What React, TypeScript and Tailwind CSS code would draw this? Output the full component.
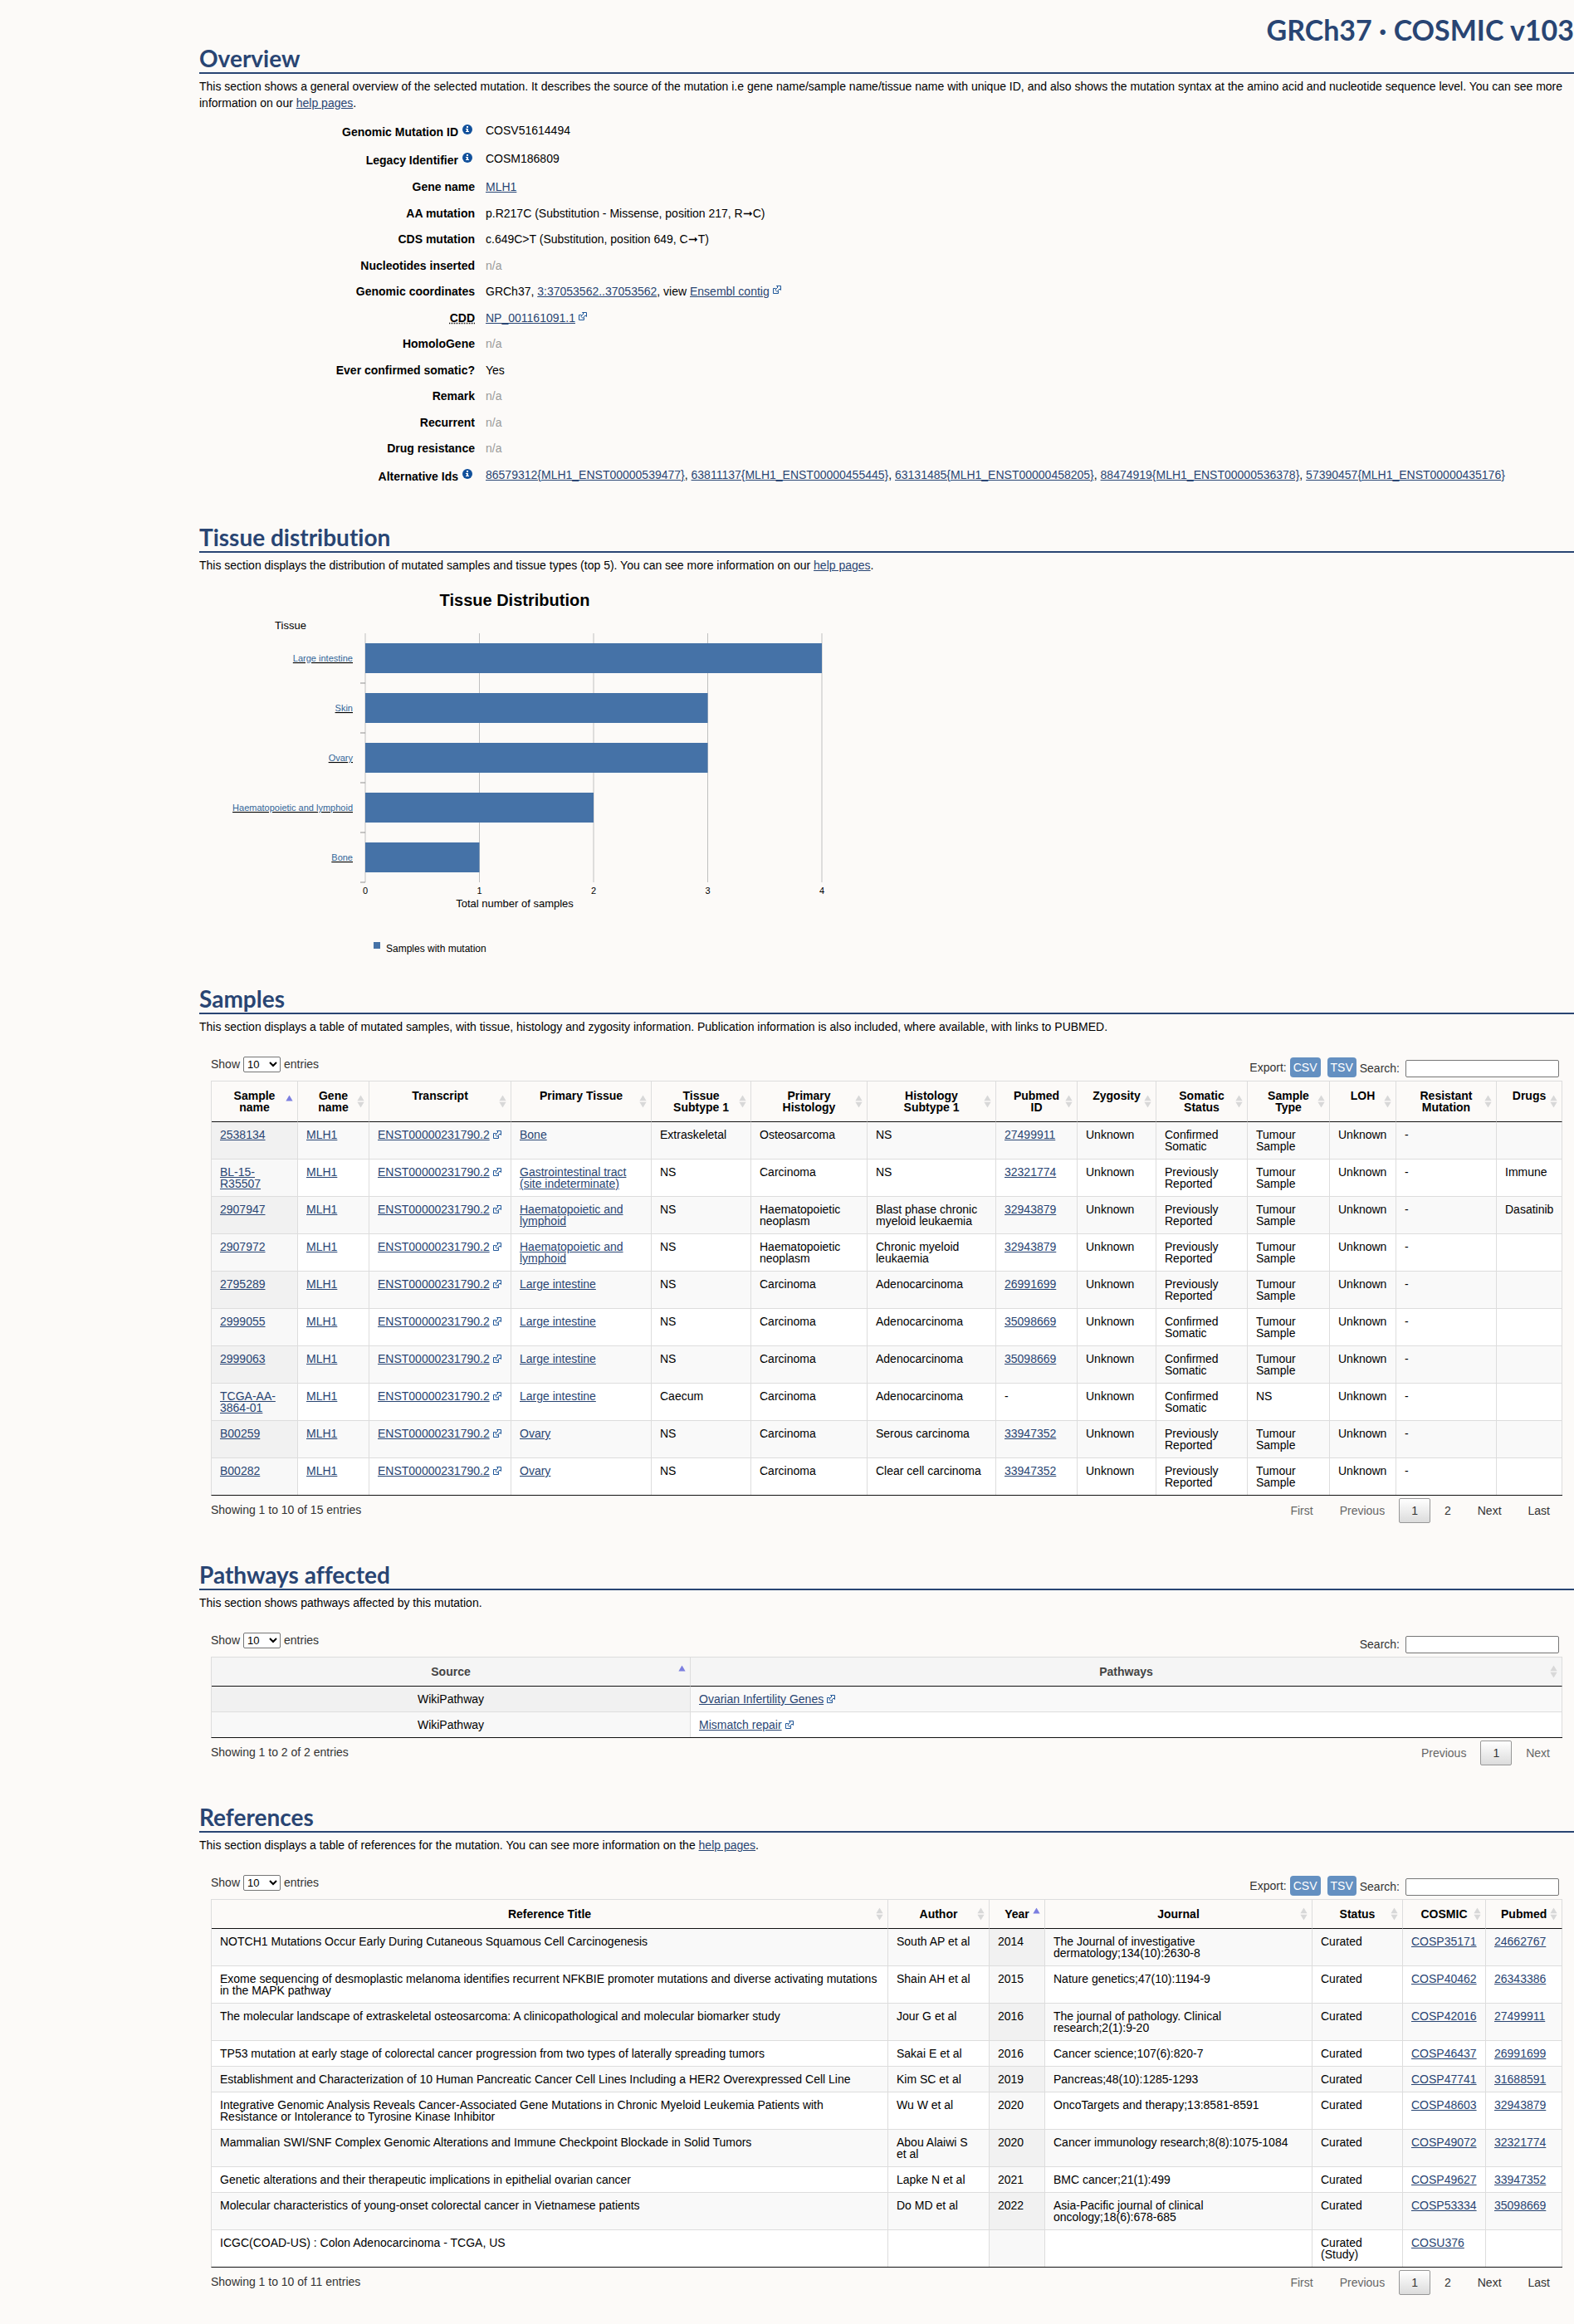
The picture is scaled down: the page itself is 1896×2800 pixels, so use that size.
import type { ReactNode } from 'react';

const na = <span className="text-[#999]">n/a</span>;

function A({ children }: { children: ReactNode }) {
  return (
    <a href="#" className="text-[#294573] underline">
      {children}
    </a>
  );
}

function ExternalIcon() {
  return (
    <svg viewBox="0 0 10 10" className="ml-1 inline-block size-[10px] align-baseline" fill="none" stroke="#1f5799" aria-hidden="true">
      <path d="M3.500 3.500H.5v6h6v-3" />
      <path d="M4.500 .5h5v5L8 4 5 7.500 2.800 5.200 6 2z" fill="#fcfaf8" />
    </svg>
  );
}

function InfoIcon() {
  return (
    <svg viewBox="0 0 12 12" className="mt-[3px] mr-[3px] ml-[5px] size-3" aria-hidden="true">
      <circle cx="6" cy="6" r="6" fill="#11509b" />
      <path d="M5 2h2v2H5zM4 5h3v3h1v1H4V8h1V6H4z" fill="#fff" />
    </svg>
  );
}

function Ext({ children }: { children: ReactNode }) {
  return (
    <span className="whitespace-nowrap">
      <A>{children}</A>
      <ExternalIcon />
    </span>
  );
}

function Section({ title, intro, children }: { title: string; intro: ReactNode; children: ReactNode }) {
  return (
    <section>
      <h2 className="border-b-2 border-[#294573] pb-[3px] font-[Lato,sans-serif] text-[28px] leading-7 font-bold text-[#294573] [font-variant-ligatures:none]">
        {title}
      </h2>
      <p className="pt-[5px] leading-5">{intro}</p>
      {children}
    </section>
  );
}

const overview: { label: ReactNode; info?: boolean; value: ReactNode }[] = [
  { label: 'Genomic Mutation ID', info: true, value: 'COSV51614494' },
  { label: 'Legacy Identifier', info: true, value: 'COSM186809' },
  { label: 'Gene name', value: <A>MLH1</A> },
  { label: 'AA mutation', value: 'p.R217C (Substitution - Missense, position 217, R➞C)' },
  { label: 'CDS mutation', value: 'c.649C>T (Substitution, position 649, C➞T)' },
  { label: 'Nucleotides inserted', value: na },
  {
    label: 'Genomic coordinates',
    value: (
      <>
        GRCh37, <A>3:37053562..37053562</A>, view <Ext>Ensembl contig</Ext>
      </>
    ),
  },
  { label: <abbr className="underline decoration-dotted">CDD</abbr>, value: <Ext>NP_001161091.1</Ext> },
  { label: 'HomoloGene', value: na },
  { label: 'Ever confirmed somatic?', value: 'Yes' },
  { label: 'Remark', value: na },
  { label: 'Recurrent', value: na },
  { label: 'Drug resistance', value: na },
  {
    label: 'Alternative Ids',
    info: true,
    value: (
      <>
        <A>{'86579312{MLH1_ENST00000539477}'}</A>, <A>{'63811137{MLH1_ENST00000455445}'}</A>,{' '}
        <A>{'63131485{MLH1_ENST00000458205}'}</A>, <A>{'88474919{MLH1_ENST00000536378}'}</A>,{' '}
        <A>{'57390457{MLH1_ENST00000435176}'}</A>
      </>
    ),
  },
];

const tissues = [
  { name: 'Large intestine', count: 4 },
  { name: 'Skin', count: 3 },
  { name: 'Ovary', count: 3 },
  { name: 'Haematopoietic and lymphoid', count: 2 },
  { name: 'Bone', count: 1 },
];

function TissueChart() {
  return (
    <svg
      width="760"
      height="460"
      className="mt-[2px] block"
      fontFamily="Liberation Sans, Arial, sans-serif"
      role="img"
      aria-label="Tissue Distribution"
    >
      <text x="380" y="37" textAnchor="middle" fontSize="20" fontWeight="bold">Tissue Distribution</text>
      <text x="110" y="65" textAnchor="middle" fontSize="13">Tissue</text>
      {[0, 1, 2, 3, 4].map((n) => (
        <g key={n}>
          <line x1={200 + n * 137.5} x2={200 + n * 137.5} y1="70" y2="370" stroke="#c0c0c0" />
          <text x={200 + n * 137.5} y="384" textAnchor="middle" fontSize="11">{n}</text>
        </g>
      ))}
      {tissues.map((t, i) => (
        <g key={t.name}>
          <rect x="200" y={82 + i * 60} width={t.count * 137.5} height="36" fill="#4572a7" />
          <line x1="194" x2="200" y1={130 + i * 60} y2={130 + i * 60} stroke="#909090" />
          <a href="#">
            <text x="185" y={104 + i * 60} textAnchor="end" fontSize="11" fill="#000" className="underline">
              <tspan fill="#336699">{t.name}</tspan>
            </text>
          </a>
        </g>
      ))}
      <text x="380" y="400" textAnchor="middle" fontSize="13">Total number of samples</text>
      <rect x="210" y="442" width="8" height="8" fill="#4572a7" />
      <text x="225" y="454" fontSize="12">Samples with mutation</text>
    </svg>
  );
}

function SortIcon({ sorted }: { sorted?: boolean }) {
  return (
    <svg viewBox="0 0 9 15" className="absolute top-1/2 right-[5px] h-[15px] w-[9px] -translate-y-1/2" aria-hidden="true">
      {sorted ? (
        <path d="M4.500 0L8.600 7H.4z" fill="#7c7fe0" />
      ) : (
        <path d="M4.500 0L8.600 6.700H.4zM4.500 15L.4 8.300h8.200z" fill="#d8d8d8" />
      )}
    </svg>
  );
}

type Column = { title: string; width: string };

type GridProps = {
  id: string;
  columns: Column[];
  rows: ReactNode[][];
  sorted: number;
  exportable?: boolean;
  muted?: boolean;
  total: string;
  pages: string[];
};

function DataGrid({ id, columns, rows, sorted, exportable, muted, total, pages }: GridProps) {
  return (
    <div className="mx-[14px] mt-[25px] pb-3 text-[#333]">
      <div className="flex h-[30px] items-start justify-between">
        <label className="flex h-5 items-center gap-1">
          Show
          <select className="h-[19px] w-[45px] rounded-xs border border-[#767676] bg-white text-[13px] text-black" defaultValue="10">
            <option>10</option>
            <option>25</option>
          </select>
          entries
        </label>
        <div className="flex h-[26px] items-end">
          {exportable && (
            <>
              <span className="mr-1 leading-6">Export:</span>
              <button className="mr-2 h-6 rounded-sm bg-[#6490c1] px-1 leading-6 text-white">CSV</button>
              <button className="mr-1 h-6 rounded-sm bg-[#6490c1] px-1 leading-6 text-white">TSV</button>
            </>
          )}
          <label htmlFor={id} className="mr-[7px] leading-[21px]">
            Search:
          </label>
          <input id={id} type="search" className="mr-1 h-[21px] w-[185px] rounded-xs border border-[#767676] bg-white px-1 text-black" />
        </div>
      </div>
      <table className="w-full table-fixed border-separate border-spacing-0 border-b border-l border-b-[#111] border-l-[#ddd] text-black">
        <colgroup>
          {columns.map((c) => (
            <col key={c.title} className={c.width} />
          ))}
        </colgroup>
        <thead>
          <tr className={muted ? 'bg-[#f5f5f5] text-[#444]' : ''}>
            {columns.map((c, i) => (
              <th
                key={c.title}
                className="relative border-t border-r border-b border-t-[#ddd] border-r-[#ddd] border-b-[#111] px-[18px] py-[10px] align-top leading-[14px] font-bold"
              >
                {c.title}
                <SortIcon sorted={i === sorted} />
              </th>
            ))}
          </tr>
        </thead>
        <tbody>
          {rows.map((row, r) => (
            <tr key={r} className="group odd:bg-[#f9f9f9] even:bg-white">
              {row.map((cell, i) => (
                <td
                  key={i}
                  className={`border-r border-b border-[#ddd] px-[10px] py-2 align-top leading-[14px] group-last:border-b-0 ${
                    i === sorted ? 'group-odd:bg-[#f1f1f1] group-even:bg-[#f8f8f8]' : ''
                  } ${muted && i === 0 ? 'text-center' : ''}`}
                >
                  {cell}
                </td>
              ))}
            </tr>
          ))}
        </tbody>
      </table>
      <div className="flex justify-between">
        <p className="pt-[7px] leading-5">{total}</p>
        <nav className="flex pt-[3px]">
          {pages.map((p) => (
            <button
              key={p}
              className={`ml-[2px] h-[30px] rounded-xs border px-[14px] ${
                p === '1'
                  ? 'border-[#979797] bg-linear-to-b from-white to-[#dcdcdc]'
                  : p === 'First' || p === 'Previous' || (p === 'Next' && muted)
                    ? 'border-transparent text-[#666]'
                    : 'border-transparent'
              }`}
            >
              {p}
            </button>
          ))}
        </nav>
      </div>
    </div>
  );
}

const sampleColumns: Column[] = [
  { title: 'Sample name', width: 'w-[104px]' },
  { title: 'Gene name', width: 'w-[86px]' },
  { title: 'Transcript', width: 'w-[171px]' },
  { title: 'Primary Tissue', width: 'w-[169px]' },
  { title: 'Tissue Subtype 1', width: 'w-[120px]' },
  { title: 'Primary Histology', width: 'w-[140px]' },
  { title: 'Histology Subtype 1', width: 'w-[155px]' },
  { title: 'Pubmed ID', width: 'w-[98px]' },
  { title: 'Zygosity', width: 'w-[95px]' },
  { title: 'Somatic Status', width: 'w-[110px]' },
  { title: 'Sample Type', width: 'w-[99px]' },
  { title: 'LOH', width: 'w-[80px]' },
  { title: 'Resistant Mutation', width: 'w-[121px]' },
  { title: 'Drugs', width: 'w-[79px]' },
];

const samples = [
  ['2538134', 'Bone', 'Extraskeletal', 'Osteosarcoma', 'NS', '27499911', 'Confirmed Somatic', 'Tumour Sample', ''],
  ['BL-15-R35507', 'Gastrointestinal tract (site indeterminate)', 'NS', 'Carcinoma', 'NS', '32321774', 'Previously Reported', 'Tumour Sample', 'Immune'],
  ['2907947', 'Haematopoietic and lymphoid', 'NS', 'Haematopoietic neoplasm', 'Blast phase chronic myeloid leukaemia', '32943879', 'Previously Reported', 'Tumour Sample', 'Dasatinib'],
  ['2907972', 'Haematopoietic and lymphoid', 'NS', 'Haematopoietic neoplasm', 'Chronic myeloid leukaemia', '32943879', 'Previously Reported', 'Tumour Sample', ''],
  ['2795289', 'Large intestine', 'NS', 'Carcinoma', 'Adenocarcinoma', '26991699', 'Previously Reported', 'Tumour Sample', ''],
  ['2999055', 'Large intestine', 'NS', 'Carcinoma', 'Adenocarcinoma', '35098669', 'Confirmed Somatic', 'Tumour Sample', ''],
  ['2999063', 'Large intestine', 'NS', 'Carcinoma', 'Adenocarcinoma', '35098669', 'Confirmed Somatic', 'Tumour Sample', ''],
  ['TCGA-AA-3864-01', 'Large intestine', 'Caecum', 'Carcinoma', 'Adenocarcinoma', '-', 'Confirmed Somatic', 'NS', ''],
  ['B00259', 'Ovary', 'NS', 'Carcinoma', 'Serous carcinoma', '33947352', 'Previously Reported', 'Tumour Sample', ''],
  ['B00282', 'Ovary', 'NS', 'Carcinoma', 'Clear cell carcinoma', '33947352', 'Previously Reported', 'Tumour Sample', ''],
];

const sampleRows = samples.map(([name, tissue, subtype, histology, histSub, pubmed, status, type, drugs]) => [
  <A>{name}</A>,
  <A>MLH1</A>,
  <Ext>ENST00000231790.2</Ext>,
  <A>{tissue}</A>,
  subtype,
  histology,
  histSub,
  pubmed === '-' ? '-' : <A>{pubmed}</A>,
  'Unknown',
  status,
  type,
  'Unknown',
  '-',
  drugs,
]);

const pathwayColumns: Column[] = [
  { title: 'Source', width: 'w-[577px]' },
  { title: 'Pathways', width: 'w-auto' },
];

const pathwayRows = [
  ['WikiPathway', <Ext>Ovarian Infertility Genes</Ext>],
  ['WikiPathway', <Ext>Mismatch repair</Ext>],
];

const referenceColumns: Column[] = [
  { title: 'Reference Title', width: 'w-auto' },
  { title: 'Author', width: 'w-[122px]' },
  { title: 'Year', width: 'w-[67px]' },
  { title: 'Journal', width: 'w-[322px]' },
  { title: 'Status', width: 'w-[109px]' },
  { title: 'COSMIC', width: 'w-[100px]' },
  { title: 'Pubmed', width: 'w-[92px]' },
];

const references = [
  ['NOTCH1 Mutations Occur Early During Cutaneous Squamous Cell Carcinogenesis', 'South AP et al', '2014', 'The Journal of investigative dermatology;134(10):2630-8', 'Curated', 'COSP35171', '24662767'],
  ['Exome sequencing of desmoplastic melanoma identifies recurrent NFKBIE promoter mutations and diverse activating mutations in the MAPK pathway', 'Shain AH et al', '2015', 'Nature genetics;47(10):1194-9', 'Curated', 'COSP40462', '26343386'],
  ['The molecular landscape of extraskeletal osteosarcoma: A clinicopathological and molecular biomarker study', 'Jour G et al', '2016', 'The journal of pathology. Clinical research;2(1):9-20', 'Curated', 'COSP42016', '27499911'],
  ['TP53 mutation at early stage of colorectal cancer progression from two types of laterally spreading tumors', 'Sakai E et al', '2016', 'Cancer science;107(6):820-7', 'Curated', 'COSP46437', '26991699'],
  ['Establishment and Characterization of 10 Human Pancreatic Cancer Cell Lines Including a HER2 Overexpressed Cell Line', 'Kim SC et al', '2019', 'Pancreas;48(10):1285-1293', 'Curated', 'COSP47741', '31688591'],
  ['Integrative Genomic Analysis Reveals Cancer-Associated Gene Mutations in Chronic Myeloid Leukemia Patients with Resistance or Intolerance to Tyrosine Kinase Inhibitor', 'Wu W et al', '2020', 'OncoTargets and therapy;13:8581-8591', 'Curated', 'COSP48603', '32943879'],
  ['Mammalian SWI/SNF Complex Genomic Alterations and Immune Checkpoint Blockade in Solid Tumors', 'Abou Alaiwi S et al', '2020', 'Cancer immunology research;8(8):1075-1084', 'Curated', 'COSP49072', '32321774'],
  ['Genetic alterations and their therapeutic implications in epithelial ovarian cancer', 'Lapke N et al', '2021', 'BMC cancer;21(1):499', 'Curated', 'COSP49627', '33947352'],
  ['Molecular characteristics of young-onset colorectal cancer in Vietnamese patients', 'Do MD et al', '2022', 'Asia-Pacific journal of clinical oncology;18(6):678-685', 'Curated', 'COSP53334', '35098669'],
  ['ICGC(COAD-US) : Colon Adenocarcinoma - TCGA, US', '', '', '', 'Curated (Study)', 'COSU376', ''],
];

const referenceRows = references.map((row) => row.map((cell, i) => (i > 4 && cell ? <A>{cell}</A> : cell)));

const allPages = ['First', 'Previous', '1', '2', 'Next', 'Last'];

export default function App() {
  return (
    <main className="min-h-screen bg-[#fcfaf8] pt-4 pl-60 font-['Liberation_Sans',Arial,sans-serif] text-[14px] leading-5 text-black">
      <h1 className="text-right font-[Lato,sans-serif] text-[34px] leading-10 font-bold text-[#294573]">GRCh37 · COSMIC v103</h1>
      <div className="flex flex-col gap-9">
        <Section
          title="Overview"
          intro={
            <>
              This section shows a general overview of the selected mutation. It describes the source of the mutation i.e gene
              name/sample name/tissue name with unique ID, and also shows the mutation syntax at the amino acid and nucleotide
              sequence level. You can see more information on our <A>help pages</A>.
            </>
          }
        >
          <dl className="pt-[13px] pb-px [&_dd_svg]:mb-[2px]">
            {overview.map((row, i) => (
              <div key={i} className={`flex ${row.info ? 'pb-3' : 'odd:pb-3 even:pb-[11px]'}`}>
                <dt className="flex w-[332px] items-start justify-end font-bold">
                  <span className={row.info ? 'pt-[2px]' : ''}>{row.label}</span>
                  {row.info && <InfoIcon />}
                </dt>
                <dd className="pl-[13px]">{row.value}</dd>
              </div>
            ))}
          </dl>
        </Section>

        <Section
          title="Tissue distribution"
          intro={
            <>
              This section displays the distribution of mutated samples and tissue types (top 5). You can see more information on
              our <A>help pages</A>.
            </>
          }
        >
          <TissueChart />
        </Section>

        <Section
          title="Samples"
          intro="This section displays a table of mutated samples, with tissue, histology and zygosity information. Publication information is also included, where available, with links to PUBMED."
        >
          <DataGrid id="sample-search" columns={sampleColumns} rows={sampleRows} sorted={0} exportable total="Showing 1 to 10 of 15 entries" pages={allPages} />
        </Section>

        <Section title="Pathways affected" intro="This section shows pathways affected by this mutation.">
          <DataGrid id="pathway-search" columns={pathwayColumns} rows={pathwayRows} sorted={0} muted total="Showing 1 to 2 of 2 entries" pages={['Previous', '1', 'Next']} />
        </Section>

        <Section
          title="References"
          intro={
            <>
              This section displays a table of references for the mutation. You can see more information on the <A>help pages</A>.
            </>
          }
        >
          <DataGrid id="reference-search" columns={referenceColumns} rows={referenceRows} sorted={2} exportable total="Showing 1 to 10 of 11 entries" pages={allPages} />
        </Section>
      </div>
    </main>
  );
}
